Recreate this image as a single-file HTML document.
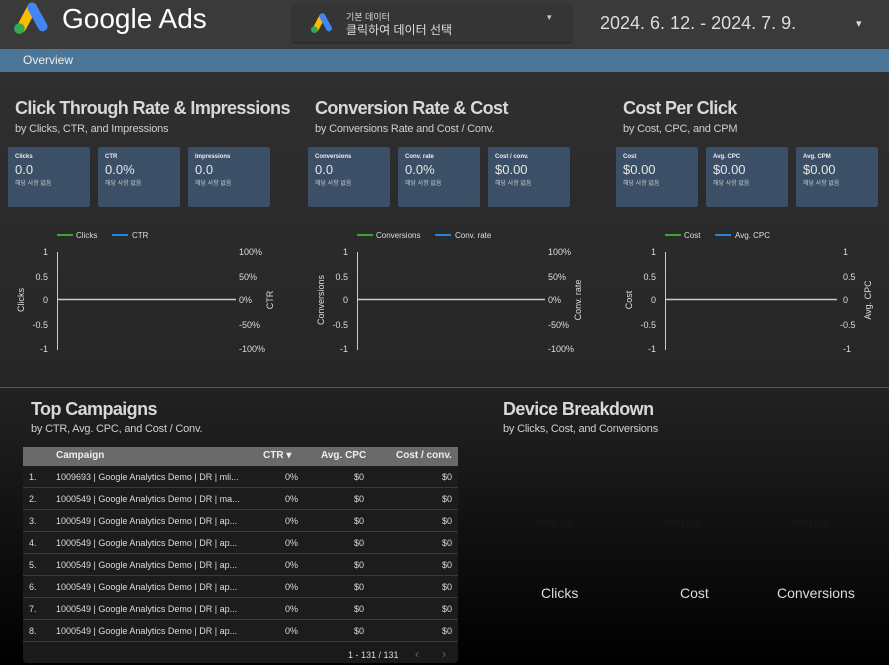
<!DOCTYPE html>
<html><head><meta charset="utf-8"><style>
*{margin:0;padding:0;box-sizing:border-box}
body{width:889px;height:665px;overflow:hidden;position:relative;font-family:"Liberation Sans","Noto Sans CJK KR",sans-serif;color:#ddd;background:linear-gradient(#2f2f2f 72px,#262626 385px,#222 388px,#000 665px)}
.a{position:absolute;white-space:nowrap}
.hdr{left:0;top:0;width:889px;height:49px;background:#3a3a3a}
.bar{left:0;top:49px;width:889px;height:23px;background:#4c7698}
.t{font-size:18px;font-weight:bold;color:#d8d8d8;letter-spacing:-0.6px}
.s{font-size:11px;color:#cfcfcf;letter-spacing:-0.2px}
.card{width:82px;height:60px;background:#3b4f66;border-radius:2px;top:147px}
.card b{position:absolute;left:7px;top:7px;font-size:6px;color:#eee}
.card i{position:absolute;left:7px;top:15px;font-style:normal;font-size:13px;color:#e6e6e6}
.card u{position:absolute;left:7px;top:31px;text-decoration:none;font-size:6px;color:#ccc}
.row{left:23px;width:435px;height:22px;font-size:9px;color:#ddd;border-bottom:1px solid #3a3a3a;background:#1c1c1c}
.row span{position:absolute;top:6px}
</style></head><body>
<div class="a hdr"></div>
<svg class="a" style="left:10px;top:1px" width="40" height="34" viewBox="0 0 36 32"><path d="M10 25 L20 6" stroke="#fbbc04" stroke-width="9" stroke-linecap="round"/><path d="M20 6 L30 24" stroke="#4285f4" stroke-width="9" stroke-linecap="round"/><circle cx="8" cy="26" r="5" fill="#34a853"/></svg>
<div class="a" style="left:62px;top:3px;font-size:28px;color:#fff">Google Ads</div>
<div class="a" style="left:293px;top:4px;width:278px;height:38px;background:#353535;box-shadow:0 1px 2px #222"></div>
<svg class="a" style="left:309px;top:12px" width="24" height="22" viewBox="0 0 36 32"><path d="M10 25 L20 6" stroke="#fbbc04" stroke-width="9" stroke-linecap="round"/><path d="M20 6 L30 24" stroke="#4285f4" stroke-width="9" stroke-linecap="round"/><circle cx="8" cy="26" r="5" fill="#34a853"/></svg>
<div class="a" style="left:346px;top:10px;font-size:9px;color:#ddd">기본 데이터</div>
<div class="a" style="left:346px;top:21px;font-size:12px;color:#ddd">클릭하여 데이터 선택</div>
<div class="a" style="left:547px;top:12px;font-size:9px;color:#ccc">▾</div>
<div class="a" style="left:600px;top:13px;font-size:18px;color:#ddd">2024. 6. 12. - 2024. 7. 9.</div>
<div class="a" style="left:856px;top:17px;font-size:11px;color:#ddd">▾</div>
<div class="a bar"></div>
<div class="a" style="left:23px;top:53px;font-size:12px;color:#eee">Overview</div>

<div class="a t" style="left:15px;top:98px">Click Through Rate &amp; Impressions</div>
<div class="a s" style="left:15px;top:123px">by Clicks, CTR, and Impressions</div>
<div class="a t" style="left:315px;top:98px">Conversion Rate &amp; Cost</div>
<div class="a s" style="left:315px;top:123px">by Conversions Rate and Cost / Conv.</div>
<div class="a t" style="left:623px;top:98px">Cost Per Click</div>
<div class="a s" style="left:623px;top:123px">by Cost, CPC, and CPM</div>

<div class="a card" style="left:8px"><b>Clicks</b><i>0.0</i><u>해당 사항 없음</u></div>
<div class="a card" style="left:98px"><b>CTR</b><i>0.0%</i><u>해당 사항 없음</u></div>
<div class="a card" style="left:188px"><b>Impressions</b><i>0.0</i><u>해당 사항 없음</u></div>
<div class="a card" style="left:308px"><b>Conversions</b><i>0.0</i><u>해당 사항 없음</u></div>
<div class="a card" style="left:398px"><b>Conv. rate</b><i>0.0%</i><u>해당 사항 없음</u></div>
<div class="a card" style="left:488px"><b>Cost / conv.</b><i>$0.00</i><u>해당 사항 없음</u></div>
<div class="a card" style="left:616px"><b>Cost</b><i>$0.00</i><u>해당 사항 없음</u></div>
<div class="a card" style="left:706px"><b>Avg. CPC</b><i>$0.00</i><u>해당 사항 없음</u></div>
<div class="a card" style="left:796px"><b>Avg. CPM</b><i>$0.00</i><u>해당 사항 없음</u></div>

<svg class="a" style="left:0;top:225px" width="889" height="135" font-family="Liberation Sans" font-size="9" fill="#ddd">
<g>
<line x1="57" y1="10" x2="73" y2="10" stroke="#3a3" stroke-width="2"/><text x="76" y="13" font-size="8">Clicks</text>
<line x1="112" y1="10" x2="128" y2="10" stroke="#1e88e5" stroke-width="2"/><text x="132" y="13" font-size="8">CTR</text>
<line x1="57.5" y1="27" x2="57.5" y2="125" stroke="#ccc"/><line x1="57" y1="74.5" x2="236" y2="74.5" stroke="#ccc" stroke-width="1.5"/>
<g text-anchor="end"><text x="48" y="30">1</text><text x="48" y="55">0.5</text><text x="48" y="78">0</text><text x="48" y="103">-0.5</text><text x="48" y="127">-1</text></g>
<text x="239" y="30">100%</text><text x="239" y="55">50%</text><text x="239" y="78">0%</text><text x="239" y="103">-50%</text><text x="239" y="127">-100%</text>
<text transform="translate(24,75) rotate(-90)" text-anchor="middle">Clicks</text><text transform="translate(273,75) rotate(-90)" text-anchor="middle">CTR</text>
</g>
<g transform="translate(300,0)">
<line x1="57" y1="10" x2="73" y2="10" stroke="#3a3" stroke-width="2"/><text x="76" y="13" font-size="8">Conversions</text>
<line x1="135" y1="10" x2="151" y2="10" stroke="#1e88e5" stroke-width="2"/><text x="155" y="13" font-size="8">Conv. rate</text>
<line x1="57.5" y1="27" x2="57.5" y2="125" stroke="#ccc"/><line x1="57" y1="74.5" x2="245" y2="74.5" stroke="#ccc" stroke-width="1.5"/>
<g text-anchor="end"><text x="48" y="30">1</text><text x="48" y="55">0.5</text><text x="48" y="78">0</text><text x="48" y="103">-0.5</text><text x="48" y="127">-1</text></g>
<text x="248" y="30">100%</text><text x="248" y="55">50%</text><text x="248" y="78">0%</text><text x="248" y="103">-50%</text><text x="248" y="127">-100%</text>
<text transform="translate(24,75) rotate(-90)" text-anchor="middle">Conversions</text><text transform="translate(281,75) rotate(-90)" text-anchor="middle">Conv. rate</text>
</g>
<g transform="translate(608,0)">
<line x1="57" y1="10" x2="73" y2="10" stroke="#3a3" stroke-width="2"/><text x="76" y="13" font-size="8">Cost</text>
<line x1="107" y1="10" x2="123" y2="10" stroke="#1e88e5" stroke-width="2"/><text x="127" y="13" font-size="8">Avg. CPC</text>
<line x1="57.5" y1="27" x2="57.5" y2="125" stroke="#ccc"/><line x1="57" y1="74.5" x2="229" y2="74.5" stroke="#ccc" stroke-width="1.5"/>
<g text-anchor="end"><text x="48" y="30">1</text><text x="48" y="55">0.5</text><text x="48" y="78">0</text><text x="48" y="103">-0.5</text><text x="48" y="127">-1</text></g>
<text x="235" y="30">1</text><text x="235" y="55">0.5</text><text x="235" y="78">0</text><text x="232" y="103">-0.5</text><text x="235" y="127">-1</text>
<text transform="translate(24,75) rotate(-90)" text-anchor="middle">Cost</text><text transform="translate(263,75) rotate(-90)" text-anchor="middle">Avg. CPC</text>
</g>
</svg>
<div class="a" style="left:0;top:387px;width:889px;height:1px;background:#4a6070"></div>

<div class="a t" style="left:31px;top:399px">Top Campaigns</div>
<div class="a s" style="left:31px;top:423px">by CTR, Avg. CPC, and Cost / Conv.</div>
<div class="a t" style="left:503px;top:399px">Device Breakdown</div>
<div class="a s" style="left:503px;top:423px">by Clicks, Cost, and Conversions</div>

<div class="a" style="left:23px;top:447px;width:435px;height:216px;background:#1a1a1a;border-radius:0 0 4px 4px"></div>
<div class="a" style="left:23px;top:447px;width:435px;height:19px;background:#6a6a6a;font-size:10px;font-weight:bold;color:#eee">
<span class="a" style="left:33px;top:3px">Campaign</span><span class="a" style="left:240px;top:3px">CTR ▾</span><span class="a" style="left:298px;top:3px">Avg. CPC</span><span class="a" style="left:373px;top:3px">Cost / conv.</span></div>
<div class="a row" style="top:466px"><span style="left:6px">1.</span><span style="left:33px">1009693 | Google Analytics Demo | DR | mli...</span><span style="left:262px">0%</span><span style="left:331px">$0</span><span style="left:419px">$0</span></div>
<div class="a row" style="top:488px"><span style="left:6px">2.</span><span style="left:33px">1000549 | Google Analytics Demo | DR | ma...</span><span style="left:262px">0%</span><span style="left:331px">$0</span><span style="left:419px">$0</span></div>
<div class="a row" style="top:510px"><span style="left:6px">3.</span><span style="left:33px">1000549 | Google Analytics Demo | DR | ap...</span><span style="left:262px">0%</span><span style="left:331px">$0</span><span style="left:419px">$0</span></div>
<div class="a row" style="top:532px"><span style="left:6px">4.</span><span style="left:33px">1000549 | Google Analytics Demo | DR | ap...</span><span style="left:262px">0%</span><span style="left:331px">$0</span><span style="left:419px">$0</span></div>
<div class="a row" style="top:554px"><span style="left:6px">5.</span><span style="left:33px">1000549 | Google Analytics Demo | DR | ap...</span><span style="left:262px">0%</span><span style="left:331px">$0</span><span style="left:419px">$0</span></div>
<div class="a row" style="top:576px"><span style="left:6px">6.</span><span style="left:33px">1000549 | Google Analytics Demo | DR | ap...</span><span style="left:262px">0%</span><span style="left:331px">$0</span><span style="left:419px">$0</span></div>
<div class="a row" style="top:598px"><span style="left:6px">7.</span><span style="left:33px">1000549 | Google Analytics Demo | DR | ap...</span><span style="left:262px">0%</span><span style="left:331px">$0</span><span style="left:419px">$0</span></div>
<div class="a row" style="top:620px"><span style="left:6px">8.</span><span style="left:33px">1000549 | Google Analytics Demo | DR | ap...</span><span style="left:262px">0%</span><span style="left:331px">$0</span><span style="left:419px">$0</span></div>
<div class="a" style="left:348px;top:650px;font-size:9px;color:#ddd">1 - 131 / 131</div>
<div class="a" style="left:415px;top:647px;font-size:12px;color:#666">‹</div>
<div class="a" style="left:442px;top:647px;font-size:12px;color:#666">›</div>

<div class="a" style="left:535px;top:518px;font-size:8px;color:#1a1a1a">데이터 없음</div>
<div class="a" style="left:662px;top:518px;font-size:8px;color:#1a1a1a">데이터 없음</div>
<div class="a" style="left:790px;top:518px;font-size:8px;color:#1a1a1a">데이터 없음</div>
<div class="a" style="left:541px;top:585px;font-size:14px;color:#ddd">Clicks</div>
<div class="a" style="left:680px;top:585px;font-size:14px;color:#ddd">Cost</div>
<div class="a" style="left:777px;top:585px;font-size:14px;color:#ddd">Conversions</div>
</body></html>
